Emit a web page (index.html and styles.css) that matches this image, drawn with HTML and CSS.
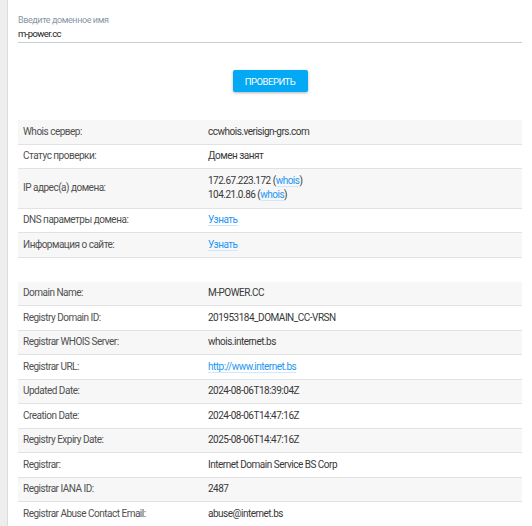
FILE: index.html
```html
<!DOCTYPE html>
<html lang="ru">
<head>
<meta charset="utf-8">
<title>Whois</title>
<link rel="stylesheet" href="styles.css">
</head>
<body>
<div class="page">
  <aside class="rail"></aside>
  <main class="main">
    <div class="field">
      <label class="field-label">Введите доменное имя</label>
      <div class="field-value">m-power.cc</div>
    </div>
    <div class="actions">
      <button class="btn">ПРОВЕРИТЬ</button>
    </div>

    <div class="table">
      <div class="row alt"><div class="k">Whois сервер:</div><div class="v">ccwhois.verisign-grs.com</div></div>
      <div class="row"><div class="k">Статус проверки:</div><div class="v">Домен занят</div></div>
      <div class="row alt tall"><div class="k">IP адрес(а) домена:</div><div class="v">172.67.223.172 (<a class="lnk">whois</a>)<br>104.21.0.86 (<a class="lnk">whois</a>)</div></div>
      <div class="row"><div class="k">DNS параметры домена:</div><div class="v"><a class="lnk">Узнать</a></div></div>
      <div class="row alt"><div class="k">Информация о сайте:</div><div class="v"><a class="lnk">Узнать</a></div></div>
    </div>

    <div class="table second">
      <div class="row alt"><div class="k">Domain Name:</div><div class="v">M-POWER.CC</div></div>
      <div class="row"><div class="k">Registry Domain ID:</div><div class="v">201953184_DOMAIN_CC-VRSN</div></div>
      <div class="row alt"><div class="k">Registrar WHOIS Server:</div><div class="v">whois.internet.bs</div></div>
      <div class="row"><div class="k">Registrar URL:</div><div class="v"><a class="lnk">http://www.internet.bs</a></div></div>
      <div class="row alt"><div class="k">Updated Date:</div><div class="v">2024-08-06T18:39:04Z</div></div>
      <div class="row"><div class="k">Creation Date:</div><div class="v">2024-08-06T14:47:16Z</div></div>
      <div class="row alt"><div class="k">Registry Expiry Date:</div><div class="v">2025-08-06T14:47:16Z</div></div>
      <div class="row"><div class="k">Registrar:</div><div class="v">Internet Domain Service BS Corp</div></div>
      <div class="row alt"><div class="k">Registrar IANA ID:</div><div class="v">2487</div></div>
      <div class="row"><div class="k">Registrar Abuse Contact Email:</div><div class="v">abuse@internet.bs</div></div>
    </div>
  </main>
</div>
</body>
</html>
```
FILE: styles.css
```css
html, body {
  margin: 0;
  padding: 0;
  background: #fff;
}
body {
  font-family: Roboto, "Liberation Sans", sans-serif;
  color: #333;
  overflow: hidden;
}
.page {
  display: flex;
  min-height: 526px;
}
.rail {
  width: 7px;
  flex: none;
  background: #eeeeee;
  border-right: 1px solid #dcdcdc;
}
.main {
  flex: 1;
  padding: 14px 10px 0 10px;
}
.field {
  display: flex;
  flex-direction: column;
  border-bottom: 1px solid #c4ced6;
  padding-bottom: 1px;
}
.field-label {
  font-size: 9px;
  line-height: 12px;
  letter-spacing: -0.4px;
  color: #8797a6;
}
.field-value {
  font-size: 9.5px;
  line-height: 15px;
  color: #222;
  letter-spacing: -0.6px;
}
.actions {
  display: flex;
  justify-content: center;
  padding: 27px 0 28px;
}
.btn {
  font-family: inherit;
  font-size: 9.5px;
  letter-spacing: -0.5px;
  color: #fff;
  background: #03a9f4;
  border: none;
  border-radius: 2px;
  width: 75px;
  height: 22px;
  padding: 0;
  box-shadow: 0 1px 3px rgba(0,0,0,0.3);
}
.table {
  display: flex;
  flex-direction: column;
}
.table.second {
  margin-top: 24px;
}
.row {
  display: grid;
  grid-template-columns: 185px 1fr;
  align-items: center;
  border-bottom: 1px solid #e2e2e2;
  font-size: 10px;
  line-height: 14px;
  letter-spacing: -0.5px;
}
.row.alt {
  background: #f7f7f7;
}
.row.tall .v {
  padding-top: 5.25px;
  padding-bottom: 5.25px;
}
.k {
  padding: 4.75px 5px;
  color: #505050;
}
.v {
  padding: 4.75px 5px;
  color: #383838;
}
.lnk {
  color: #2196f3;
  text-decoration: none;
  border-bottom: 1px solid #cfe8fb;
}
```
